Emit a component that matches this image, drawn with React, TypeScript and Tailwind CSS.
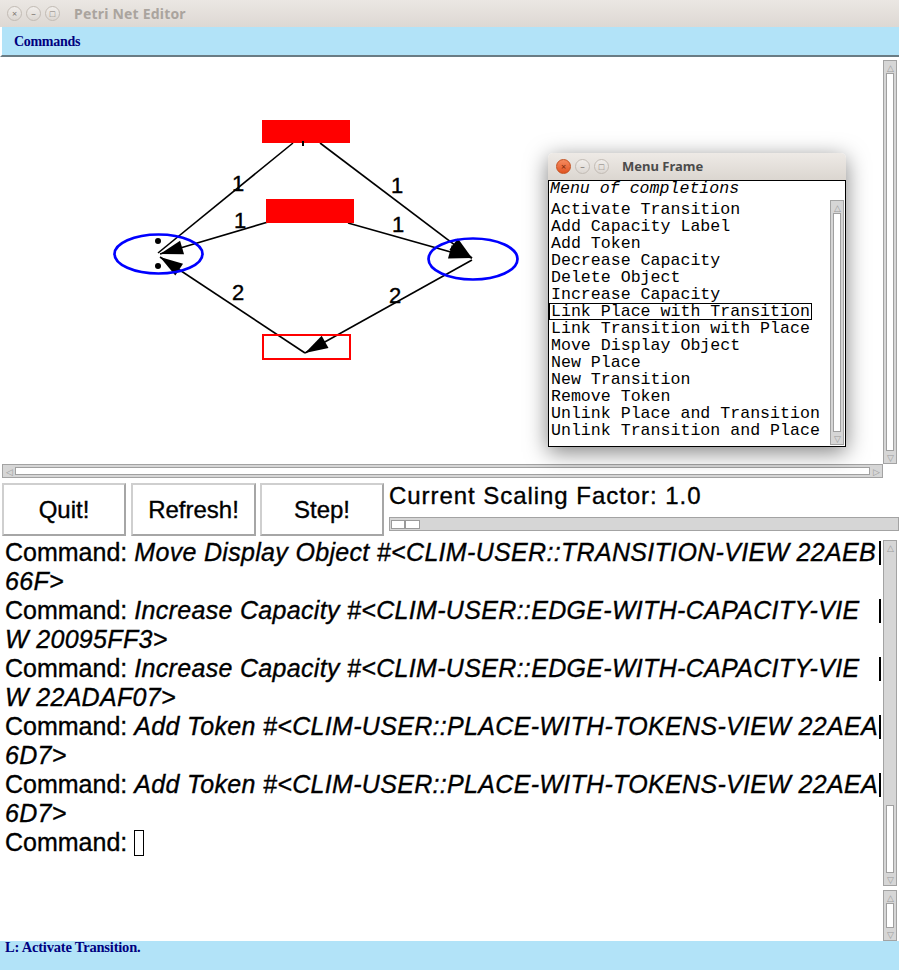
import React from 'react';

const sans = { fontFamily: '"Liberation Sans", Arial, sans-serif' };
const serif = { fontFamily: '"Liberation Serif", "Times New Roman", serif' };
const mono = { fontFamily: '"Liberation Mono", "Courier New", monospace' };
const ui = { fontFamily: '"Noto Sans", "Open Sans", sans-serif' };

// arrowhead polygon, tip at (x2, y2)
const head = (x1: number, y1: number, x2: number, y2: number, len = 23, w = 7) => {
  const d = Math.hypot(x2 - x1, y2 - y1);
  const ux = (x2 - x1) / d;
  const uy = (y2 - y1) / d;
  const bx = x2 - ux * len;
  const by = y2 - uy * len;
  return `${x2},${y2} ${bx - uy * w},${by + ux * w} ${bx + uy * w},${by - ux * w}`;
};

const edges = [
  { x1: 293, y1: 143, x2: 158, y2: 253, arrow: false, label: '1', lx: 238, ly: 185 },
  { x1: 320, y1: 143, x2: 472, y2: 258, arrow: true, label: '1', lx: 397, ly: 187 },
  { x1: 285, y1: 217, x2: 160, y2: 254, arrow: true, label: '1', lx: 240, ly: 222 },
  { x1: 348, y1: 223, x2: 472, y2: 258, arrow: true, label: '1', lx: 398, ly: 226 },
  { x1: 472, y1: 260, x2: 305, y2: 353, arrow: true, label: '2', lx: 395, ly: 297 },
  { x1: 305, y1: 353, x2: 160, y2: 257, arrow: true, label: '2', lx: 238, ly: 294 },
];

const completions = [
  'Activate Transition',
  'Add Capacity Label',
  'Add Token',
  'Decrease Capacity',
  'Delete Object',
  'Increase Capacity',
  'Link Place with Transition',
  'Link Transition with Place',
  'Move Display Object',
  'New Place',
  'New Transition',
  'Remove Token',
  'Unlink Place and Transition',
  'Unlink Transition and Place',
];

const history: { cmd?: boolean; text: string; bar?: boolean }[] = [
  { cmd: true, text: 'Move Display Object #<CLIM-USER::TRANSITION-VIEW 22AEB', bar: true },
  { text: '66F>' },
  { cmd: true, text: 'Increase Capacity #<CLIM-USER::EDGE-WITH-CAPACITY-VIE', bar: true },
  { text: 'W 20095FF3>' },
  { cmd: true, text: 'Increase Capacity #<CLIM-USER::EDGE-WITH-CAPACITY-VIE', bar: true },
  { text: 'W 22ADAF07>' },
  { cmd: true, text: 'Add Token #<CLIM-USER::PLACE-WITH-TOKENS-VIEW 22AEA', bar: true },
  { text: '6D7>' },
  { cmd: true, text: 'Add Token #<CLIM-USER::PLACE-WITH-TOKENS-VIEW 22AEA', bar: true },
  { text: '6D7>' },
];

const ArrowBox = ({ glyph }: { glyph: string }) => (
  <div className="h-[12px] w-full flex items-center justify-center bg-[#d6d6d6] text-[9px] leading-none text-[#9a9a9a]">
    {glyph}
  </div>
);

const VScroll = ({ className, track }: { className: string; track?: string }) => (
  <div className={`w-[14px] flex flex-col border border-[#a3a3a3] bg-[#d6d6d6] ${className}`}>
    <ArrowBox glyph="△" />
    {track && <div className={`${track} bg-[#d6d6d6]`} />}
    <div className="flex-1 mx-[2px] bg-white border border-[#a0a0a0]" />
    <ArrowBox glyph="▽" />
  </div>
);

const TrafficDot = ({ glyph, red }: { glyph: string; red?: boolean }) => (
  <div
    className={`w-[15px] h-[15px] rounded-full flex items-center justify-center text-[9px] leading-none border ${
      red
        ? 'bg-linear-to-b from-[#f58a5e] to-[#e0531f] border-[#c4501f] text-[#7a2a0c]'
        : 'bg-linear-to-b from-[#f1eeeb] to-[#dcd7d2] border-[#c2bbb4] text-[#7d7771]'
    }`}
  >
    {glyph}
  </div>
);

const Button = ({ label, w }: { label: string; w: string }) => (
  <div
    className={`${w} h-full flex items-center justify-center bg-white border-2 border-t-[#cfcfcf] border-l-[#cfcfcf] border-b-[#a6a6a6] border-r-[#a6a6a6] text-[24px] text-black [-webkit-text-stroke:0.35px_black]`}
    style={sans}
  >
    {label}
  </div>
);

export default function App() {
  return (
    <div className="relative w-[899px] h-[970px] overflow-hidden bg-white flex flex-col">
      {/* window title bar */}
      <div className="h-[27px] shrink-0 flex items-center pl-[7px] gap-[4px] bg-linear-to-b from-[#ebe7e3] to-[#ddd8d3]">
        <TrafficDot glyph="×" />
        <TrafficDot glyph="–" />
        <TrafficDot glyph="□" />
        <span className="ml-[10px] text-[14px] font-bold text-[#aaa49e] tracking-[0.2px]" style={ui}>
          Petri Net Editor
        </span>
      </div>

      {/* menu bar */}
      <div className="h-[30px] shrink-0 flex items-center pl-[12px] bg-[#b2e3f8] border-b-2 border-[#6a7c84] border-l-2 border-l-white">
        <span className="text-[14px] font-bold text-[#00007f] tracking-[-0.3px]" style={serif}>
          Commands
        </span>
      </div>

      {/* drawing pane */}
      <div className="h-[407px] shrink-0 flex">
        <div className="flex-1 relative">
          <svg width="883" height="407" viewBox="0 57 883 407" className="block">
            {edges.map((e, i) => (
              <g key={i}>
                <line x1={e.x1} y1={e.y1} x2={e.x2} y2={e.y2} stroke="black" strokeWidth="1.6" />
                {e.arrow && <polygon points={head(e.x1, e.y1, e.x2, e.y2)} fill="black" />}
                <text
                  x={e.lx}
                  y={e.ly}
                  fontSize="22"
                  textAnchor="middle"
                  dominantBaseline="middle"
                  fontFamily='"Liberation Sans", Arial, sans-serif'
                  stroke="black"
                  strokeWidth="0.4"
                >
                  {e.label}
                </text>
              </g>
            ))}
            <rect x="262" y="120" width="88" height="23" fill="#ff0000" />
            <rect x="266" y="199" width="88" height="24" fill="#ff0000" />
            <rect x="263" y="335" width="87" height="24" fill="none" stroke="#ff0000" strokeWidth="2" />
            <line x1="303" y1="141" x2="303" y2="146" stroke="black" strokeWidth="2" />
            <ellipse cx="158.5" cy="254" rx="44" ry="19.5" fill="none" stroke="#0000ff" strokeWidth="2.7" />
            <ellipse cx="473" cy="259" rx="44.5" ry="20.5" fill="none" stroke="#0000ff" strokeWidth="2.7" />
            <circle cx="158" cy="241" r="3" fill="black" />
            <circle cx="158" cy="266" r="3" fill="black" />
          </svg>
        </div>
        <VScroll className="mt-[3px] mr-[2px]" />
      </div>

      {/* horizontal scroll bar */}
      <div className="h-[15px] shrink-0 pl-[2px] pr-[16px]">
        <div className="h-[14px] flex border border-[#a3a3a3] bg-[#d6d6d6]">
          <div className="w-[12px] flex items-center justify-center text-[9px] leading-none text-[#9a9a9a]">◁</div>
          <div className="flex-1 my-[2px] bg-white border border-[#a0a0a0]" />
          <div className="w-[12px] flex items-center justify-center text-[9px] leading-none text-[#9a9a9a]">▷</div>
        </div>
      </div>

      {/* buttons + scaling */}
      <div className="h-[53px] shrink-0 mt-[4px] flex pl-[2px]">
        <Button label="Quit!" w="w-[124px]" />
        <div className="w-[5px]" />
        <Button label="Refresh!" w="w-[125px]" />
        <div className="w-[4px]" />
        <Button label="Step!" w="w-[124px]" />
        <div className="flex-1 pl-[5px] flex flex-col">
          <div
            className="h-[27px] text-[24px] leading-[26px] tracking-[0.95px] text-black [-webkit-text-stroke:0.35px_black]"
            style={sans}
          >
            Current Scaling Factor: 1.0
          </div>
          <div className="mt-[7px] h-[14px] flex items-center bg-[#d6d6d6] border border-[#a3a3a3]">
            <div className="ml-[1px] w-[14px] h-[9px] bg-white border border-[#9a9a9a]" />
            <div className="w-[15px] h-[9px] bg-white border border-[#9a9a9a]" />
          </div>
        </div>
      </div>

      {/* interactor */}
      <div className="h-[403px] shrink-0 mt-[2px] flex">
        <div
          className="flex-1 pl-[5px] overflow-hidden text-[25px] leading-[29px] text-black [-webkit-text-stroke:0.35px_black]"
          style={sans}
        >
          {history.map((l, i) => (
            <div key={i} className="h-[29px] flex items-center whitespace-nowrap">
              {l.cmd && <span className="mr-[7px]">Command:</span>}
              <span className="italic tracking-[0.32px]">{l.text}</span>
              {l.bar && <div className="ml-auto mr-[2px] w-[2px] h-[24px] bg-black" />}
            </div>
          ))}
          <div className="h-[29px] flex items-center">
            <span>Command:</span>
            <div className="ml-[7px] w-[10px] h-[26px] border border-black" />
          </div>
        </div>
        <div className="w-[16px] flex flex-col pr-[2px] pt-[2px]">
          <VScroll className="h-[346px]" track="h-[252px]" />
          <VScroll className="mt-[4px] h-[51px]" />
        </div>
      </div>

      {/* status line */}
      <div className="flex-1 bg-[#b2e3f8] pl-[5px]">
        <div className="text-[14.5px] leading-[13px] font-bold text-[#00007f] tracking-[-0.2px]" style={serif}>
          L: Activate Transition.
        </div>
      </div>

      {/* floating completion menu */}
      <div className="absolute left-[548px] top-[153px] w-[298px] h-[294px] flex flex-col rounded-t-[5px] shadow-[0_5px_22px_rgba(0,0,0,0.5)]">
        <div className="h-[27px] flex items-center pl-[8px] gap-[4px] rounded-t-[5px] bg-linear-to-b from-[#eeeae6] to-[#dbd6d0]">
          <TrafficDot glyph="×" red />
          <TrafficDot glyph="–" />
          <TrafficDot glyph="□" />
          <span className="ml-[9px] text-[13px] font-bold text-[#4b4b4b]" style={ui}>
            Menu Frame
          </span>
        </div>
        <div className="flex-1 flex flex-col bg-white border border-black">
          <div className="h-[18px] pl-[1px] text-[16.6px] leading-[16px] italic text-black" style={mono}>
            Menu of completions
          </div>
          <div className="flex-1 flex">
            <div className="flex-1 pt-[2px] text-[16.6px] text-black" style={mono}>
              {completions.map((c) => (
                <div key={c} className="h-[17px] flex whitespace-nowrap">
                  <span
                    className={`h-[17px] leading-[17px] px-[2px] ${
                      c === 'Link Place with Transition' ? 'outline outline-1 outline-black -outline-offset-1' : ''
                    }`}
                  >
                    {c}
                  </span>
                </div>
              ))}
            </div>
            <VScroll className="mr-[1px] mt-[1px] mb-[1px]" />
          </div>
        </div>
      </div>
    </div>
  );
}
